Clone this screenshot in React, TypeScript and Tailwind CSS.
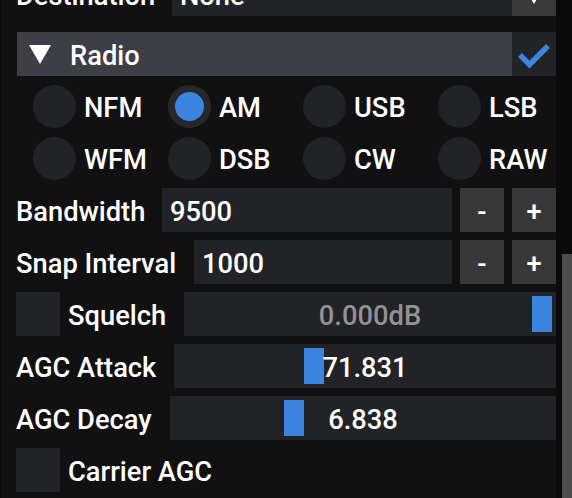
import React from "react";

const FRAME = "bg-[#222326]";

function T({ children, className = "" }: { children: React.ReactNode; className?: string }) {
  return <span className={`relative top-[2px] whitespace-nowrap ${className}`}>{children}</span>;
}

function Triangle() {
  return (
    <svg width="22" height="19" viewBox="0 0 22 19">
      <polygon points="0,0 22,0 11,19" fill="#ffffff" />
    </svg>
  );
}

function Radio({ label, selected }: { label: string; selected?: boolean }) {
  return (
    <div className="flex items-center h-[44px] pl-[17px] gap-[8px]">
      <div
        className={`w-[43px] h-[43px] rounded-full flex items-center justify-center ${
          selected ? "bg-[#27282c]" : "bg-[#222326]"
        }`}
      >
        {selected && <div className="w-[29px] h-[29px] rounded-full bg-[#3b84e0]" />}
      </div>
      <T>{label}</T>
    </div>
  );
}

function InputRow({ label, labelW, value }: { label: string; labelW: string; value: string }) {
  return (
    <div className="flex h-[44px] items-center shrink-0">
      <div className={`${labelW} shrink-0`}>
        <T>{label}</T>
      </div>
      <div className={`flex-1 h-full ${FRAME} flex items-center pl-[8px]`}>
        <T>{value}</T>
      </div>
      <div className="w-[44px] h-full ml-[8px] bg-[#383838] flex items-center justify-center">
        <T>-</T>
      </div>
      <div className="w-[44px] h-full ml-[8px] bg-[#383838] flex items-center justify-center">
        <T>+</T>
      </div>
    </div>
  );
}

function Slider({ grabLeft, value, dim }: { grabLeft: number; value: string; dim?: boolean }) {
  return (
    <div className={`relative flex-1 h-full ${FRAME} flex items-center justify-center`}>
      <div
        className="absolute top-[4px] bottom-[4px] w-[20px] bg-[#3b84e0]"
        style={{ left: grabLeft }}
      />
      <T className={dim ? "text-[#929292]" : "text-white"}>{value}</T>
    </div>
  );
}

export default function App() {
  return (
    <div
      className="w-[572px] h-[498px] overflow-hidden bg-[#111111] flex text-white font-medium text-[27.3px] leading-[32px]"
      style={{ fontFamily: "Roboto, 'Noto Sans', sans-serif" }}
    >
      <div className="w-px bg-[#0b0b0b] shrink-0" />
      <div className="flex-1 flex flex-col gap-[8px] pl-[15px] mt-[-28px]">
        {/* Destination combo */}
        <div className="flex h-[44px] items-center mb-[8px] shrink-0">
          <div className="w-[156px] shrink-0">
            <T>Destination</T>
          </div>
          <div className={`flex-1 h-full ${FRAME} flex items-center pl-[8px]`}>
            <T>None</T>
          </div>
          <div className="w-[44px] h-full bg-[#3a3a3a] flex items-center justify-center">
            <Triangle />
          </div>
        </div>

        {/* Radio header */}
        <div className="flex h-[44px] ml-px shrink-0">
          <div className="flex-1 bg-[#3e3e46] flex items-center pl-[12px]">
            <Triangle />
            <T className="ml-[19px]">Radio</T>
          </div>
          <div className="w-[44px] h-full bg-[#222326]">
            <svg width="44" height="44" viewBox="0 0 44 44">
              <polyline
                points="8,23 17.5,32.5 36,14"
                fill="none"
                stroke="#3b84e0"
                strokeWidth="5.5"
              />
            </svg>
          </div>
        </div>

        {/* Modes */}
        <div className="grid grid-cols-4 gap-y-[8px] shrink-0">
          <Radio label="NFM" />
          <Radio label="AM" selected />
          <Radio label="USB" />
          <Radio label="LSB" />
          <Radio label="WFM" />
          <Radio label="DSB" />
          <Radio label="CW" />
          <Radio label="RAW" />
        </div>

        <InputRow label="Bandwidth" labelW="w-[146px]" value="9500" />
        <InputRow label="Snap Interval" labelW="w-[178px]" value="1000" />

        {/* Squelch */}
        <div className="flex h-[44px] items-center shrink-0">
          <div className={`w-[44px] h-[44px] shrink-0 ${FRAME}`} />
          <div className="w-[124px] shrink-0 pl-[8px]">
            <T>Squelch</T>
          </div>
          <Slider grabLeft={348} value="0.000dB" dim />
        </div>

        {/* AGC Attack */}
        <div className="flex h-[44px] items-center shrink-0">
          <div className="w-[158px] shrink-0">
            <T>AGC Attack</T>
          </div>
          <Slider grabLeft={130} value="71.831" />
        </div>

        {/* AGC Decay */}
        <div className="flex h-[44px] items-center shrink-0">
          <div className="w-[154px] shrink-0">
            <T>AGC Decay</T>
          </div>
          <Slider grabLeft={114} value="6.838" />
        </div>

        {/* Carrier AGC */}
        <div className="flex h-[44px] items-center shrink-0">
          <div className={`w-[44px] h-[44px] shrink-0 ${FRAME}`} />
          <div className="pl-[8px]">
            <T>Carrier AGC</T>
          </div>
        </div>
      </div>

      {/* Scrollbar */}
      <div className="w-[16px] shrink-0 bg-[#0b0b0b] flex flex-col">
        <div className="h-[254px] shrink-0" />
        <div className="flex-1 ml-[6px] bg-[#4d4d4d]" />
      </div>
    </div>
  );
}
